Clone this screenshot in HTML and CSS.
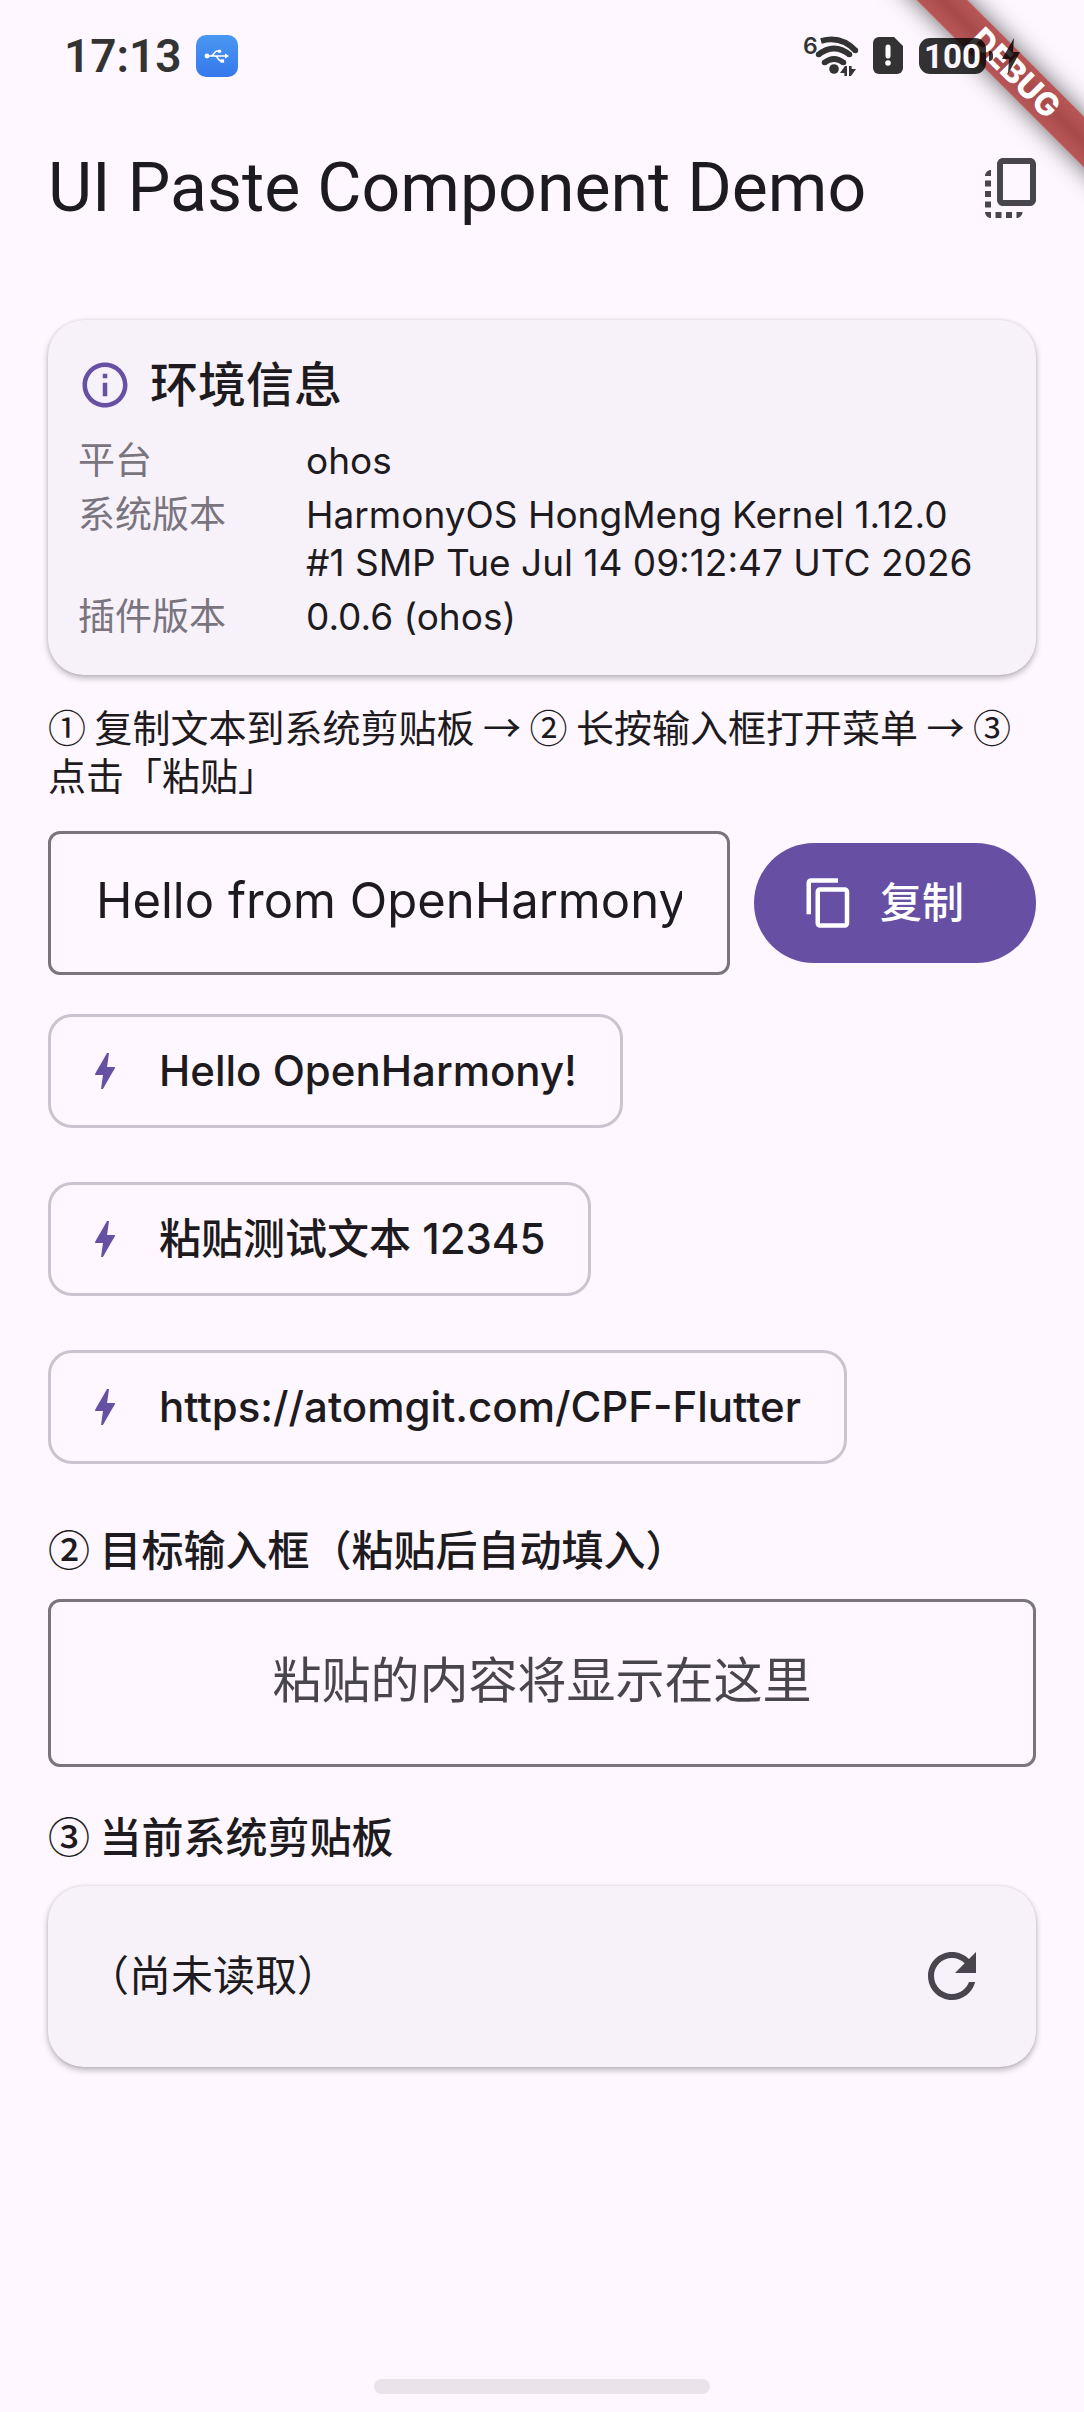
FILE: index.html
```html
<!DOCTYPE html>
<html lang="zh-CN">
<head>
    <meta charset="UTF-8">
    <meta name="viewport" content="width=device-width, initial-scale=1.0">
    <title>UI Paste Component Demo</title>
    <link rel="stylesheet" href="styles.css">
</head>
<body>
    <div class="debug-corner"><span class="debug-banner">DEBUG</span></div>

    <div class="status-bar">
        <div class="status-left">
            <span class="clock">17:13</span>
            <span class="usb">
                <svg width="42" height="42" viewBox="0 0 42 42" fill="none" stroke="#fff" stroke-width="1.6">
                    <path d="M10 21h20M15 21c3 0 3-5 6-5h2M19 21c3 0 3 5 6 5h1"/>
                    <path d="M29 18.6v4.8l4-2.4z" fill="#fff" stroke="none"/>
                    <circle cx="11" cy="21" r="2.4" fill="#fff" stroke="none"/>
                    <circle cx="23.5" cy="16.3" r="1.8" fill="#fff" stroke="none"/>
                    <rect x="24.5" y="24.3" width="3.6" height="3.4" fill="#fff" stroke="none"/>
                </svg>
            </span>
        </div>
        <div class="status-right">
            <!-- wifi 6 -->
            <svg class="wifi" width="60" height="48" viewBox="0 0 60 48">
                <text x="3" y="22" class="wifi-gen">6</text>
                <g fill="none" stroke="#333" stroke-width="5.6">
                    <path d="M21 9Q41 3 56 19" />
                    <path d="M18 23Q34 10 50 23"/>
                    <path d="M24 31Q34 23 44 31"/>
                </g>
                <circle cx="18.5" cy="22.6" r="2.7" fill="#333"/>
                <circle cx="55.5" cy="18.6" r="2.7" fill="#333"/>
                <circle cx="49.6" cy="22.6" r="2.7" fill="#333"/>
                <circle cx="24.4" cy="30.6" r="2.7" fill="#333"/>
                <circle cx="43.6" cy="30.6" r="2.7" fill="#333"/>
                <circle cx="34" cy="37" r="4.8" fill="#333"/>
                <path d="M40 41l5-7h2v10h-2.6v-3zM49 34h2.6v3H56l-5 7h-2z" fill="#333"/>
            </svg>
            <!-- sim -->
            <svg class="sim" width="32" height="38" viewBox="0 0 32 38">
                <path d="M7 0h15l9 9v22a6 6 0 0 1-6 6H7a6 6 0 0 1-6-6V6a6 6 0 0 1 6-6z" fill="#333"/>
                <path d="M16 10v9" stroke="#fff" stroke-width="5" stroke-linecap="round"/>
                <circle cx="16" cy="26" r="2.8" fill="#fff"/>
            </svg>
            <span class="battery">100</span>
            <span class="battery-nub"></span>
            <svg class="charging" width="20" height="36" viewBox="0 0 20 36">
                <path d="M13 0L1 21h7L7 36l12-22h-7z" fill="rgba(0,0,0,.8)"/>
            </svg>
        </div>
    </div>

    <header class="app-bar">
        <h1>UI Paste Component Demo</h1>
        <button class="icon-btn" aria-label="copy all">
            <svg width="72" height="72" viewBox="0 0 24 24" fill="#49454f">
                <path d="M18 2H9c-1.1 0-2 .9-2 2v12c0 1.1.9 2 2 2h9c1.1 0 2-.9 2-2V4c0-1.1-.9-2-2-2zm0 14H9V4h9v12zM3 15v-2h2v2H3zm0-5.5h2v2H3v-2zM10 20h2v2h-2v-2zm-7-1.5v-2h2v2H3zM5 22c-1.1 0-2-.9-2-2h2v2zm3.500 0h-2v-2h2v2zm5 0v-2h2c0 1.1-.9 2-2 2zM5 6v2H3c0-1.1.9-2 2-2z"/>
            </svg>
        </button>
    </header>

    <main>
        <section class="card info-card">
            <h2>
                <svg width="54" height="54" viewBox="0 0 24 24" fill="#6750a4">
                    <path d="M11 7h2v2h-2zm0 4h2v6h-2zm1-9C6.48 2 2 6.48 2 12s4.48 10 10 10 10-4.48 10-10S17.52 2 12 2zm0 18c-4.41 0-8-3.59-8-8s3.59-8 8-8 8 3.59 8 8-3.59 8-8 8z"/>
                </svg>
                环境信息
            </h2>
            <dl>
                <dt>平台</dt><dd>ohos</dd>
                <dt>系统版本</dt><dd>HarmonyOS HongMeng Kernel 1.12.0 #1 SMP Tue Jul 14 09:12:47 UTC 2026</dd>
                <dt>插件版本</dt><dd>0.0.6 (ohos)</dd>
            </dl>
        </section>

        <p class="steps">① 复制文本到系统剪贴板 → ② 长按输入框打开菜单 → ③ 点击「粘贴」</p>

        <div class="copy-row">
            <input type="text" id="source" class="field" aria-label="复制文本" value="Hello from OpenHarmony">
            <button class="btn-copy" onclick="copyText(document.getElementById('source').value)">
                <svg width="54" height="54" viewBox="0 0 24 24" fill="#fff">
                    <path d="M16 1H4c-1.1 0-2 .9-2 2v14h2V3h12V1zm3 4H8c-1.1 0-2 .9-2 2v14c0 1.1.9 2 2 2h11c1.1 0 2-.9 2-2V7c0-1.1-.9-2-2-2zm0 16H8V7h11v14z"/>
                </svg>
                复制
            </button>
        </div>

        <div class="chips">
            <button class="chip" onclick="copyText('Hello OpenHarmony!')">
                <svg width="48" height="48" viewBox="0 0 24 24"><use href="#bolt"/></svg>
                Hello OpenHarmony!
            </button>
            <button class="chip" onclick="copyText('粘贴测试文本 12345')">
                <svg width="48" height="48" viewBox="0 0 24 24"><use href="#bolt"/></svg>
                粘贴测试文本 12345
            </button>
            <button class="chip" onclick="copyText('https://atomgit.com/CPF-Flutter')">
                <svg width="48" height="48" viewBox="0 0 24 24"><use href="#bolt"/></svg>
                https://atomgit.com/CPF-Flutter
            </button>
        </div>

        <label class="section-title" for="target">② 目标输入框（粘贴后自动填入）</label>
        <input type="text" id="target" class="field target" placeholder="粘贴的内容将显示在这里">

        <h3 class="section-title">③ 当前系统剪贴板</h3>
        <section class="card clip-card">
            <p id="clip">（尚未读取）</p>
            <button class="icon-btn" aria-label="refresh" onclick="readClip()">
                <svg width="72" height="72" viewBox="0 0 24 24" fill="#49454f">
                    <path d="M17.65 6.35C16.2 4.9 14.21 4 12 4c-4.42 0-7.99 3.58-7.99 8s3.57 8 7.99 8c3.73 0 6.84-2.55 7.73-6h-2.08c-.82 2.33-3.04 4-5.65 4-3.31 0-6-2.69-6-6s2.69-6 6-6c1.66 0 3.14.69 4.22 1.78L13 11h7V4l-2.35 2.35z"/>
                </svg>
            </button>
        </section>
    </main>

    <div class="home-bar"></div>

    <svg class="defs" width="0" height="0">
        <symbol id="bolt" viewBox="0 0 24 24">
            <path fill="#6750a4" d="M11 21h-1l1-7H7.5c-.88 0-.33-.75-.31-.78C8.48 10.94 10.42 7.54 13.01 3h1l-1 7h3.51c.4 0 .62.19.4.66C12.97 17.55 11 21 11 21z"/>
        </symbol>
    </svg>

    <script>
        function copyText(text) {
            navigator.clipboard.writeText(text);
        }

        async function readClip() {
            document.getElementById("clip").innerText = await navigator.clipboard.readText();
        }
    </script>
</body>
</html>
```
FILE: styles.css
```css
* { box-sizing: border-box; }

body {
    margin: 0;
    min-height: 100vh;
    display: flex;
    flex-direction: column;
    position: relative;
    background-color: #fef7ff;
    color: #1d1b20;
    font-family: Inter, "Noto Sans CJK SC", sans-serif;
    font-size: 37px;
    line-height: 48px;
}

h1, h2, h3, p, dl, dd { margin: 0; }

button, input {
    font-family: inherit;
    line-height: inherit;
    color: inherit;
}

button {
    border: none;
    background: none;
    padding: 0;
    cursor: pointer;
}

svg {
    display: block;
    flex-shrink: 0;
}

.defs { position: absolute; }

/* status bar */
.status-bar {
    position: relative;
    z-index: 2;
    height: 104px;
    padding: 8px 63px 0 64px;
    display: flex;
    align-items: center;
    justify-content: space-between;
}

.status-left, .status-right {
    display: flex;
    align-items: center;
}

.clock {
    font-family: Roboto, sans-serif;
    font-size: 46px;
    font-weight: 600;
    color: #333;
    margin-right: 14px;
}

.usb {
    border-radius: 10px;
    background: linear-gradient(#4a97f2, #3678ec);
}

.wifi-gen {
    font-size: 23px;
    font-weight: 600;
    fill: #333;
}

.sim { margin: 0 15px 0 12px; }

.battery {
    width: 67px;
    height: 36px;
    border-radius: 11px;
    background: rgba(0,0,0,0.8);
    color: #fef7ff;
    font-family: Roboto, sans-serif;
    font-size: 33px;
    font-weight: 700;
    line-height: 37px;
    text-align: center;
}

.battery-nub {
    width: 4px;
    height: 10px;
    margin: 0 8px 0 3px;
    border-radius: 0 4px 4px 0;
    background: rgba(0,0,0,0.8);
}

/* debug ribbon */
.debug-corner {
    position: absolute;
    top: 0;
    right: 0;
    width: 220px;
    height: 220px;
    overflow: hidden;
    z-index: 1;
    pointer-events: none;
}

.debug-banner {
    position: absolute;
    top: 53px;
    right: -79px;
    width: 300px;
    height: 36px;
    padding-left: 6px;
    line-height: 36px;
    text-align: center;
    transform: rotate(45deg);
    background: linear-gradient(#b95757, #a84a4a 50%, #b95757);
    box-shadow: 0 0 24px rgba(0,0,0,0.6);
    color: #fff;
    font-size: 32px;
    font-weight: 800;
}

/* app bar */
.app-bar {
    height: 168px;
    padding: 0 36px 0 48px;
    display: flex;
    align-items: center;
    justify-content: space-between;
}

.app-bar h1 {
    font-family: Roboto, sans-serif;
    font-size: 68px;
    font-weight: 400;
    line-height: 84px;
}

main {
    padding: 48px;
    flex: 1;
}

.card {
    background-color: #f7f2fa;
    border-radius: 36px;
    box-shadow: 0 3px 6px rgba(0,0,0,0.28), 0 0 3px rgba(0,0,0,0.1);
}

.info-card { padding: 29px 48px 34px 30px; }

.info-card h2 {
    display: flex;
    align-items: center;
    gap: 18px;
    font-size: 48px;
    font-weight: 500;
    line-height: 72px;
    margin-bottom: 16px;
}

.info-card dl {
    display: grid;
    grid-template-columns: 228px 1fr;
    row-gap: 6px;
}

.info-card dt { color: #79747e; }

.steps {
    margin: 27px 0 33px;
    font-family: "Noto Sans CJK SC", sans-serif;
    font-size: 38px;
}

.copy-row {
    display: flex;
    align-items: center;
    gap: 24px;
}

.field {
    width: 100%;
    min-width: 0;
    height: 144px;
    padding: 0 45px 6px;
    border: 3px solid #79747e;
    border-radius: 12px;
    background: transparent;
    font-size: 49px;
    outline: none;
}

.btn-copy {
    flex-shrink: 0;
    display: flex;
    align-items: center;
    gap: 24px;
    height: 120px;
    padding: 0 72px 0 48px;
    border-radius: 60px;
    background-color: #6750a4;
    color: #fff;
    font-size: 42px;
    font-weight: 500;
}

.chips {
    display: flex;
    flex-direction: column;
    align-items: flex-start;
    gap: 54px;
    margin: 39px 0 54px;
}

.chip {
    display: flex;
    align-items: center;
    gap: 30px;
    height: 114px;
    padding: 0 43px 0 30px;
    border: 3px solid #cac4d0;
    border-radius: 24px;
    font-size: 42px;
    font-weight: 500;
}

.section-title {
    display: block;
    font-family: "Noto Sans CJK SC", sans-serif;
    font-size: 42px;
    font-weight: 500;
    line-height: 60px;
    margin-bottom: 21px;
}

.target {
    height: 168px;
    margin-bottom: 38px;
    text-align: center;
}

.target::placeholder {
    color: #49454f;
    opacity: 1;
}

.clip-card {
    display: flex;
    align-items: center;
    justify-content: space-between;
    padding: 54px 48px 55px 39px;
    font-size: 42px;
}

.home-bar {
    width: 31%;
    height: 15px;
    margin: 0 auto 18px;
    border-radius: 8px;
    background-color: #eae3ea;
}
```
